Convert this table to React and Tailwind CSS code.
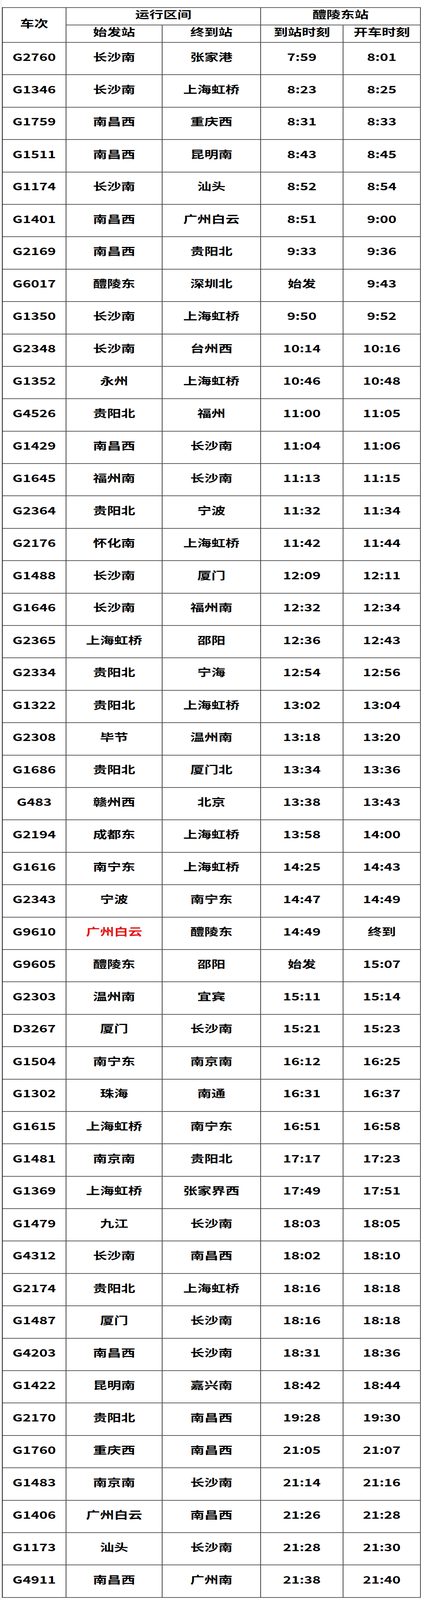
const rows = [
  ['G2760', '长沙南', '张家港', '7:59', '8:01'],
  ['G1346', '长沙南', '上海虹桥', '8:23', '8:25'],
  ['G1759', '南昌西', '重庆西', '8:31', '8:33'],
  ['G1511', '南昌西', '昆明南', '8:43', '8:45'],
  ['G1174', '长沙南', '汕头', '8:52', '8:54'],
  ['G1401', '南昌西', '广州白云', '8:51', '9:00'],
  ['G2169', '南昌西', '贵阳北', '9:33', '9:36'],
  ['G6017', '醴陵东', '深圳北', '始发', '9:43'],
  ['G1350', '长沙南', '上海虹桥', '9:50', '9:52'],
  ['G2348', '长沙南', '台州西', '10:14', '10:16'],
  ['G1352', '永州', '上海虹桥', '10:46', '10:48'],
  ['G4526', '贵阳北', '福州', '11:00', '11:05'],
  ['G1429', '南昌西', '长沙南', '11:04', '11:06'],
  ['G1645', '福州南', '长沙南', '11:13', '11:15'],
  ['G2364', '贵阳北', '宁波', '11:32', '11:34'],
  ['G2176', '怀化南', '上海虹桥', '11:42', '11:44'],
  ['G1488', '长沙南', '厦门', '12:09', '12:11'],
  ['G1646', '长沙南', '福州南', '12:32', '12:34'],
  ['G2365', '上海虹桥', '邵阳', '12:36', '12:43'],
  ['G2334', '贵阳北', '宁海', '12:54', '12:56'],
  ['G1322', '贵阳北', '上海虹桥', '13:02', '13:04'],
  ['G2308', '毕节', '温州南', '13:18', '13:20'],
  ['G1686', '贵阳北', '厦门北', '13:34', '13:36'],
  ['G483', '赣州西', '北京', '13:38', '13:43'],
  ['G2194', '成都东', '上海虹桥', '13:58', '14:00'],
  ['G1616', '南宁东', '上海虹桥', '14:25', '14:43'],
  ['G2343', '宁波', '南宁东', '14:47', '14:49'],
  ['G9610', '广州白云', '醴陵东', '14:49', '终到', true],
  ['G9605', '醴陵东', '邵阳', '始发', '15:07'],
  ['G2303', '温州南', '宜宾', '15:11', '15:14'],
  ['D3267', '厦门', '长沙南', '15:21', '15:23'],
  ['G1504', '南宁东', '南京南', '16:12', '16:25'],
  ['G1302', '珠海', '南通', '16:31', '16:37'],
  ['G1615', '上海虹桥', '南宁东', '16:51', '16:58'],
  ['G1481', '南京南', '贵阳北', '17:17', '17:23'],
  ['G1369', '上海虹桥', '张家界西', '17:49', '17:51'],
  ['G1479', '九江', '长沙南', '18:03', '18:05'],
  ['G4312', '长沙南', '南昌西', '18:02', '18:10'],
  ['G2174', '贵阳北', '上海虹桥', '18:16', '18:18'],
  ['G1487', '厦门', '长沙南', '18:16', '18:18'],
  ['G4203', '南昌西', '长沙南', '18:31', '18:36'],
  ['G1422', '昆明南', '嘉兴南', '18:42', '18:44'],
  ['G2170', '贵阳北', '南昌西', '19:28', '19:30'],
  ['G1760', '重庆西', '南昌西', '21:05', '21:07'],
  ['G1483', '南京南', '长沙南', '21:14', '21:16'],
  ['G1406', '广州白云', '南昌西', '21:26', '21:28'],
  ['G1173', '汕头', '长沙南', '21:28', '21:30'],
  ['G4911', '南昌西', '广州南', '21:38', '21:40'],
];

// every cell draws its own right and bottom rule; the grid draws left and top
const cell = 'flex items-center justify-center pb-[16px] border-r-2 border-b-2 border-r-[#444] border-b-[#222]';

export default function App() {
  return (
    <div className="w-[1080px] h-[4096px] overflow-hidden bg-white">
      <div className="w-[1080px] h-[5699px] origin-top scale-y-[0.718723] bg-white pl-[2px] font-['Noto_Sans_CJK_SC','Noto_Sans',sans-serif] font-bold text-[36px] leading-none text-black">
        <div className="h-full border-l border-l-[#d6d6d6] pl-[2px] pt-[26px]">
          <div className="w-[1072px] grid grid-cols-[163px_246px_252px_211px_198px] grid-rows-[62px_62px_repeat(48,115.4px)] border-l-2 border-t-2 border-[#222]">
            {/* Header */}
            <div className={`${cell} row-span-2`}>车次</div>
            <div className={`${cell} col-span-2`}>运行区间</div>
            <div className={`${cell} col-span-2`}>醴陵东站</div>
            <div className={cell}>始发站</div>
            <div className={cell}>终到站</div>
            <div className={cell}>到站时刻</div>
            <div className={cell}>开车时刻</div>

            {rows.map(([train, from, to, arrive, depart, red]) => (
              <div key={train} className="contents">
                <div className={cell}>{train}</div>
                <div className={`${cell} ${red ? 'text-[#e31414]' : ''}`}>{from}</div>
                <div className={cell}>{to}</div>
                <div className={cell}>{arrive}</div>
                <div className={cell}>{depart}</div>
              </div>
            ))}
          </div>
        </div>
      </div>
    </div>
  );
}
